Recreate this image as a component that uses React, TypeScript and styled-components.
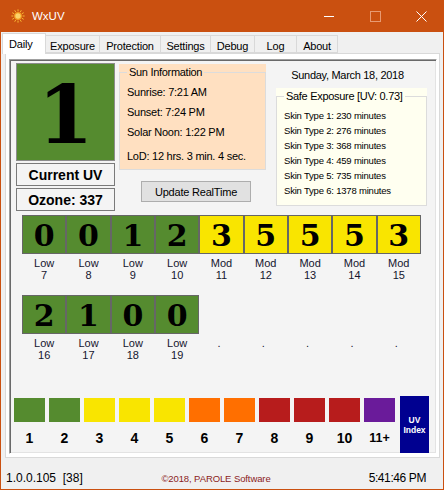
import React from 'react';
import styled, { createGlobalStyle } from 'styled-components';

const GREEN = '#558b2f';
const YELLOW = '#f9e500';
const ORANGE = '#ff6f00';
const RED = '#b71c1c';
const PURPLE = '#6a1b9a';

const GlobalStyle = createGlobalStyle`
  html, body { margin: 0; padding: 0; background: #fff; }
  body { font-family: "Liberation Sans", Arial, sans-serif; color: #000; }
  * { box-sizing: border-box; }
`;

const Window = styled.div`
  width: 444px;
  height: 490px;
  background: #f0f0f0;
  border: 1px solid #ca5010;
  border-top: none;
  display: flex;
  flex-direction: column;
  overflow: hidden;
`;

const TitleBar = styled.div`
  height: 32px;
  flex: none;
  background: #ca5010;
  display: flex;
  align-items: center;
  margin: 0 -1px;
`;

const AppIcon = styled.svg`
  width: 14px;
  height: 14px;
  margin-left: 11px;
  margin-top: -1px;
`;

const Title = styled.span`
  margin-left: 7px;
  color: #fff;
  font-size: 11.5px;
  flex: 1;
`;

const WinButton = styled.div`
  width: 46px;
  height: 32px;
  display: flex;
  align-items: center;
  justify-content: center;
`;

const TabStrip = styled.div`
  height: 21px;
  margin-top: 1px;
  padding-left: 1px;
  display: flex;
  align-items: flex-end;
  flex: none;
`;

const Tab = styled.div<{ $active?: boolean; $w: number }>`
  width: ${p => p.$w}px;
  height: ${p => (p.$active ? 21 : 18)}px;
  font-size: 11px;
  letter-spacing: -0.2px;
  line-height: 14px;
  border: 1px solid #d9d9d9;
  border-bottom: ${p => (p.$active ? 'none' : '1px solid #d9d9d9')};
  border-left: ${p => (p.$active ? '1px solid #d9d9d9' : 'none')};
  background: ${p => (p.$active ? '#fff' : '#f0f0f0')};
  padding: ${p => (p.$active ? '3px 0 0 6px' : '3px 0 0 0')};
  text-align: ${p => (p.$active ? 'left' : 'center')};
  margin-bottom: ${p => (p.$active ? '0' : '1px')};
  position: relative;
  z-index: ${p => (p.$active ? 2 : 1)};
`;

const TabPage = styled.div`
  width: 435px;
  height: 405px;
  margin: -1px 0 0 4px;
  border: 1px solid #d9d9d9;
  background: #fff;
  flex: none;
`;

const Panel = styled.div`
  width: 428px;
  height: 395px;
  margin: 5px 0 0 3px;
  border: 1px solid;
  border-color: #a0a0a0 #fff #fff #a0a0a0;
  box-shadow: inset 1px 1px 0 #696969, inset -1px -1px 0 #e3e3e3;
  background: #f4f4f4;
`;

const TopSection = styled.div`
  display: flex;
  align-items: flex-start;
  padding: 3px 0 0 6px;
  height: 151px;
`;

const LeftCol = styled.div`
  width: 99px;
  display: flex;
  flex-direction: column;
  gap: 2px;
`;

const UvTile = styled.div`
  height: 98px;
  background: ${GREEN};
  border: 1px solid #8c8c8c;
  display: flex;
  align-items: center;
  justify-content: center;
  font-family: "DejaVu Serif", serif;
  font-weight: bold;
  font-size: 80px;
  line-height: 1;
  padding-top: 6px;
`;

const InfoBox = styled.div`
  height: 23px;
  border: 1px solid #7a7a7a;
  font-weight: bold;
  font-size: 14px;
  display: flex;
  align-items: center;
  justify-content: center;
  padding-top: 1px;
`;

const MidCol = styled.div`
  width: 147px;
  margin: 1px 0 0 4px;
  display: flex;
  flex-direction: column;
`;

const Group = styled.div<{ $bg: string; $h: number }>`
  background: ${p => p.$bg};
  height: ${p => p.$h}px;
  padding-top: 1px;
  display: flex;
`;

const GroupFrame = styled.fieldset`
  flex: 1;
  margin: 0;
  border: 1px solid #dcdcdc;
  padding: 0 0 0 7px;
  min-width: 0;
`;

const GroupLegend = styled.legend`
  padding: 0 2px;
  font-size: 11px;
  letter-spacing: -0.3px;
  line-height: 14px;
`;

const SunLine = styled.div<{ $gap?: number }>`
  font-size: 11px;
  letter-spacing: -0.25px;
  line-height: 20px;
  margin-top: ${p => p.$gap ?? 0}px;
  white-space: nowrap;
`;

const UpdateButton = styled.div`
  width: 110px;
  height: 21px;
  margin: 11px 0 0 22px;
  background: #e1e1e1;
  border: 1px solid #adadad;
  font-size: 11px;
  letter-spacing: -0.2px;
  display: flex;
  align-items: center;
  justify-content: center;
`;

const RightCol = styled.div`
  width: 151px;
  margin-left: 10px;
  display: flex;
  flex-direction: column;
`;

const DateText = styled.div`
  font-size: 11px;
  letter-spacing: -0.3px;
  line-height: 14px;
  margin: 5px 0 6px;
  text-align: center;
  padding-right: 8px;
`;

const SkinLine = styled.div<{ $first?: boolean }>`
  font-size: 9.5px;
  letter-spacing: -0.2px;
  line-height: 15px;
  margin-top: ${p => (p.$first ? 5 : 0)}px;
  white-space: nowrap;
`;

const HourGrid = styled.div`
  display: grid;
  grid-template-columns: repeat(9, 44.33px);
  row-gap: 13.5px;
  margin: 4px 0 0 12px;
`;

const HourCell = styled.div`
  display: flex;
  flex-direction: column;
`;

const HourBox = styled.div<{ $bg: string }>`
  height: 39px;
  background: ${p => p.$bg};
  border: 1px solid #666;
  display: flex;
  align-items: center;
  justify-content: center;
  font-family: "DejaVu Serif", "Liberation Serif", serif;
  font-weight: bold;
  font-size: 30px;
  line-height: 1;
  padding-top: 2px;
`;

const HourLabel = styled.div<{ $empty?: boolean }>`
  padding-top: ${p => (p.$empty ? 41.5 : 2.5)}px;
  padding-right: ${p => (p.$empty ? 5 : 0)}px;
  font-size: 11px;
  line-height: 12.5px;
  text-align: center;
  color: #15152e;
  white-space: pre;
`;

const Legend = styled.div`
  display: flex;
  align-items: flex-start;
  margin: 36.5px 0 0 4px;
`;

const LegendItem = styled.div`
  width: 31px;
  margin-right: 4px;
  display: flex;
  flex-direction: column;
  align-items: center;
`;

const Swatch = styled.div<{ $bg: string }>`
  width: 31px;
  height: 24px;
  background: ${p => p.$bg};
`;

const SwatchNum = styled.div<{ $small?: boolean }>`
  margin-top: 8px;
  line-height: 16px;
  font-weight: bold;
  font-size: ${p => (p.$small ? 12.5 : 14)}px;
`;

const UvBadge = styled.div`
  width: 29px;
  height: 57px;
  margin: -2px 0 0 1px;
  background: #000090;
  color: #fff;
  font-weight: bold;
  font-size: 8.5px;
  line-height: 10px;
  display: flex;
  flex-direction: column;
  align-items: center;
  justify-content: center;
`;

const StatusBar = styled.div`
  flex: 1;
  display: grid;
  grid-template-columns: 1fr auto 1fr;
  align-items: center;
  padding: 9px 17px 0 5px;
`;

const Version = styled.span`
  font-size: 12px;
  white-space: pre;
`;

const Copyright = styled.span`
  font-size: 9.5px;
  color: #8b1c1c;
  letter-spacing: -0.1px;
`;

const Clock = styled.span`
  justify-self: end;
  font-size: 12px;
  letter-spacing: -0.4px;
`;

const tabs = [
  { label: 'Daily', w: 44, active: true },
  { label: 'Exposure', w: 54 },
  { label: 'Protection', w: 61 },
  { label: 'Settings', w: 50 },
  { label: 'Debug', w: 44 },
  { label: 'Log', w: 42 },
  { label: 'About', w: 41 },
];

const hours: { v?: number; level?: string; hour?: number }[] = [
  { v: 0, level: 'Low', hour: 7 },
  { v: 0, level: 'Low', hour: 8 },
  { v: 1, level: 'Low', hour: 9 },
  { v: 2, level: 'Low', hour: 10 },
  { v: 3, level: 'Mod', hour: 11 },
  { v: 5, level: 'Mod', hour: 12 },
  { v: 5, level: 'Mod', hour: 13 },
  { v: 5, level: 'Mod', hour: 14 },
  { v: 3, level: 'Mod', hour: 15 },
  { v: 2, level: 'Low', hour: 16 },
  { v: 1, level: 'Low', hour: 17 },
  { v: 0, level: 'Low', hour: 18 },
  { v: 0, level: 'Low', hour: 19 },
  {}, {}, {}, {}, {},
];

const scale = [
  { n: '1', c: GREEN },
  { n: '2', c: GREEN },
  { n: '3', c: YELLOW },
  { n: '4', c: YELLOW },
  { n: '5', c: YELLOW },
  { n: '6', c: ORANGE },
  { n: '7', c: ORANGE },
  { n: '8', c: RED },
  { n: '9', c: RED },
  { n: '10', c: RED },
  { n: '11+', c: PURPLE },
];

const skin = [230, 276, 368, 459, 735, 1378];

const uvColor = (v: number) => (v <= 2 ? GREEN : v <= 5 ? YELLOW : v <= 7 ? ORANGE : v <= 10 ? RED : PURPLE);

const SunIcon = () => (
  <AppIcon viewBox="0 0 14 14">
    {Array.from({ length: 12 }).map((_, i) => {
      const a = (i * Math.PI) / 6;
      return (
        <line
          key={i}
          x1={7 + Math.cos(a) * 4.6}
          y1={7 + Math.sin(a) * 4.6}
          x2={7 + Math.cos(a) * 6.6}
          y2={7 + Math.sin(a) * 6.6}
          stroke="#f7b733"
          strokeWidth="1"
        />
      );
    })}
    <circle cx="7" cy="7" r="3.3" fill="#fbd46a" stroke="#f29a1f" strokeWidth="1.2" />
  </AppIcon>
);

const App: React.FC = () => {
  return (
    <>
      <GlobalStyle />
      <Window>
        <TitleBar>
          <SunIcon />
          <Title>WxUV</Title>
          <WinButton>
            <svg width="10" height="10" viewBox="0 0 10 10">
              <line x1="0" y1="5.5" x2="10" y2="5.5" stroke="#fff" strokeWidth="1" />
            </svg>
          </WinButton>
          <WinButton>
            <svg width="11" height="11" viewBox="0 0 11 11">
              <rect x="0.5" y="0.5" width="10" height="10" fill="none" stroke="#e89a72" strokeWidth="1" />
            </svg>
          </WinButton>
          <WinButton>
            <svg width="11" height="11" viewBox="0 0 11 11">
              <path d="M0.5 0.5 L10.5 10.5 M10.5 0.5 L0.5 10.5" stroke="#fff" strokeWidth="1" />
            </svg>
          </WinButton>
        </TitleBar>

        <TabStrip>
          {tabs.map(t => (
            <Tab key={t.label} $w={t.w} $active={t.active}>
              {t.label}
            </Tab>
          ))}
        </TabStrip>

        <TabPage>
          <Panel>
            <TopSection>
              <LeftCol>
                <UvTile>1</UvTile>
                <InfoBox>Current UV</InfoBox>
                <InfoBox>Ozone: 337</InfoBox>
              </LeftCol>

              <MidCol>
                <Group $bg="#ffe0c1" $h={106}>
                  <GroupFrame>
                    <GroupLegend>Sun Information</GroupLegend>
                    <SunLine $gap={3}>Sunrise: 7:21 AM</SunLine>
                    <SunLine>Sunset: 7:24 PM</SunLine>
                    <SunLine>Solar Noon: 1:22 PM</SunLine>
                    <SunLine $gap={4}>LoD: 12 hrs. 3 min. 4 sec.</SunLine>
                  </GroupFrame>
                </Group>
                <UpdateButton>Update RealTime</UpdateButton>
              </MidCol>

              <RightCol>
                <DateText>Sunday, March 18, 2018</DateText>
                <Group $bg="#fffff0" $h={118}>
                  <GroupFrame>
                    <GroupLegend>Safe Exposure [UV: 0.73]</GroupLegend>
                    {skin.map((m, i) => (
                      <SkinLine key={i} $first={i === 0}>
                        Skin Type {i + 1}: {m} minutes
                      </SkinLine>
                    ))}
                  </GroupFrame>
                </Group>
              </RightCol>
            </TopSection>

            <HourGrid>
              {hours.map((h, i) =>
                h.v === undefined ? (
                  <HourCell key={i}>
                    <HourLabel $empty>.</HourLabel>
                  </HourCell>
                ) : (
                  <HourCell key={i}>
                    <HourBox $bg={uvColor(h.v)}>{h.v}</HourBox>
                    <HourLabel>{`${h.level}\n${h.hour}`}</HourLabel>
                  </HourCell>
                )
              )}
            </HourGrid>

            <Legend>
              {scale.map(s => (
                <LegendItem key={s.n}>
                  <Swatch $bg={s.c} />
                  <SwatchNum $small={s.n === '11+'}>{s.n}</SwatchNum>
                </LegendItem>
              ))}
              <UvBadge>
                <span>UV</span>
                <span>Index</span>
              </UvBadge>
            </Legend>
          </Panel>
        </TabPage>

        <StatusBar>
          <Version>1.0.0.105  [38]</Version>
          <Copyright>©2018, PAROLE Software</Copyright>
          <Clock>5:41:46 PM</Clock>
        </StatusBar>
      </Window>
    </>
  );
};

export default App;
